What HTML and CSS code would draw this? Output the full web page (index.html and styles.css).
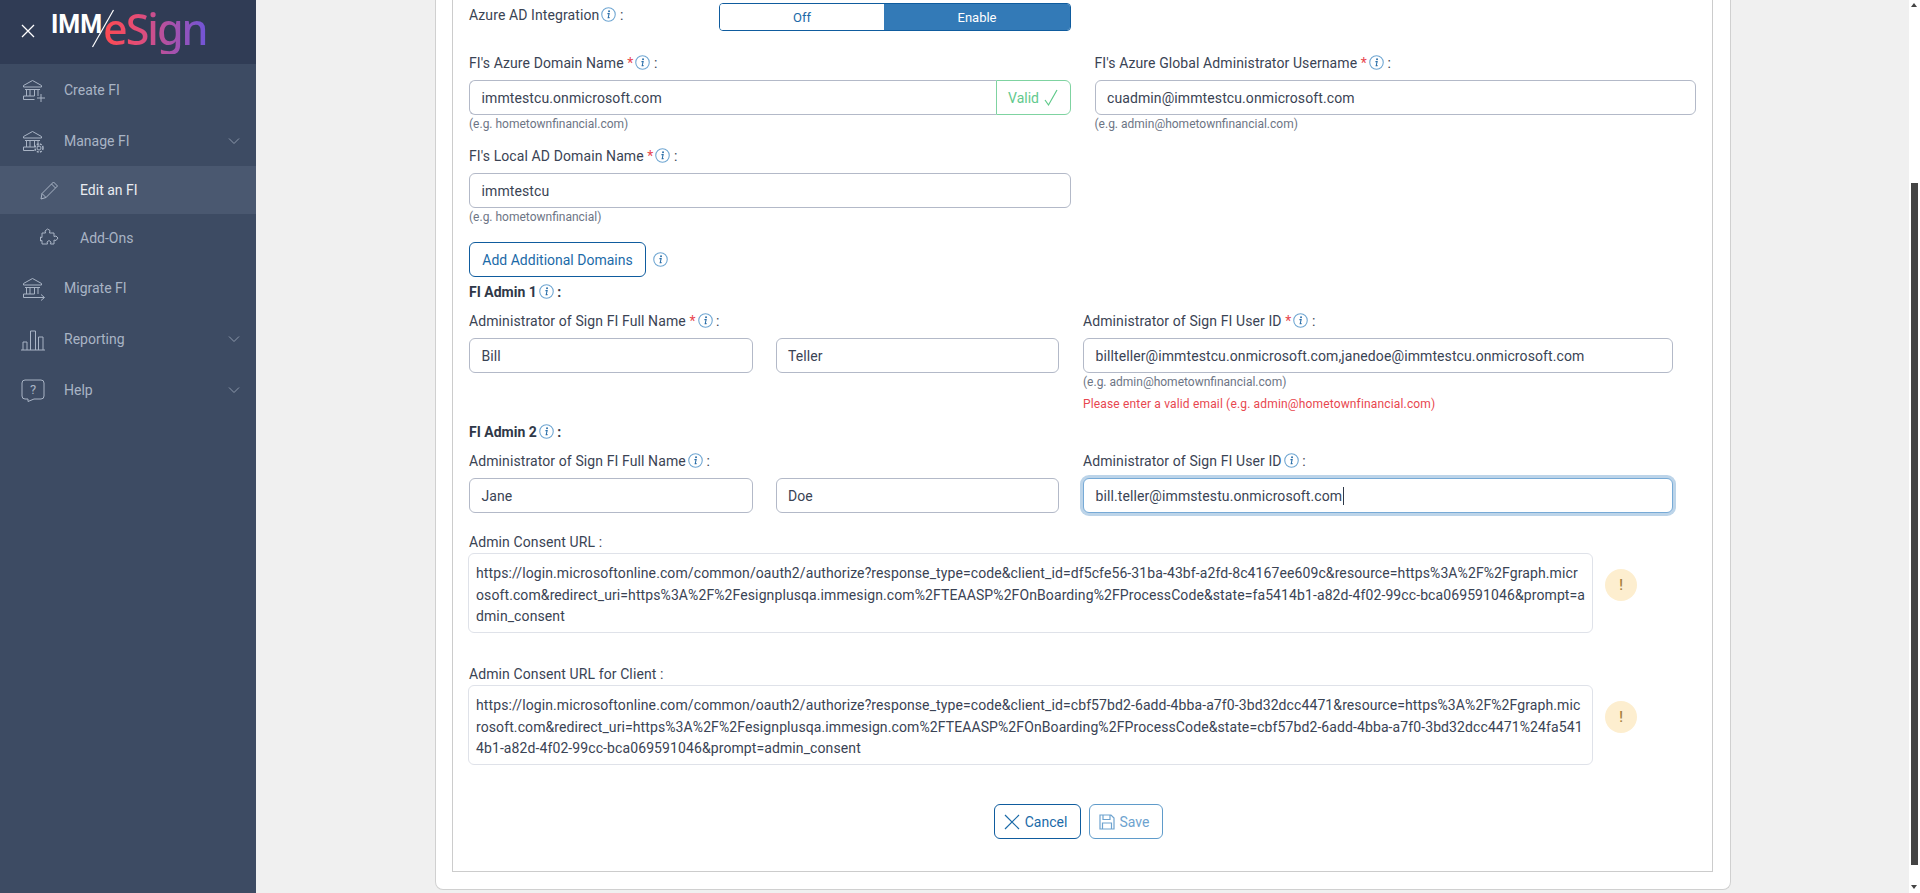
FILE: index.html
```html
<!DOCTYPE html>
<html lang="en">
<head>
<meta charset="utf-8">
<title>IMM eSign - Edit an FI</title>
<link rel="stylesheet" href="styles.css">
</head>
<body>
<svg class="defs" width="0" height="0" aria-hidden="true">
  <symbol id="info" viewBox="0 0 14 14">
    <circle cx="7" cy="7" r="6.300" fill="none" stroke="#6fa6d2" stroke-width="1"/>
    <circle cx="7.500" cy="4" r=".9" fill="#2a6ea8"/>
    <path d="M6 6.200h1.600l-.9 3.700h1.300" fill="none" stroke="#2a6ea8" stroke-width="1"/>
  </symbol>
  <symbol id="bank" viewBox="0 0 24 24">
    <path d="M2.500 7.500 11.500 2.500l9 5v1.500h-18zM4 11.500h15M5.500 11.500v6.500M9 11.500v6.500M13.500 11.500v6.500M17 11.500v6.500M2.500 18h11M2.500 18v3.500h11" fill="none" stroke="currentColor" stroke-width="1"/>
  </symbol>
  <symbol id="chev" viewBox="0 0 12 8">
    <path d="M1 1.500 6 6.500l5-5" fill="none" stroke="currentColor" stroke-width="1"/>
  </symbol>
</svg>

<div class="app">
  <aside class="sidebar">
    <header class="brand">
      <svg class="close" viewBox="0 0 14 14" width="14" height="14"><path d="M1 1l12 12M13 1 1 13" stroke="#fff" stroke-width="1.300"/></svg>
      <div class="logo">
        <span class="logo-imm">IMM</span>
        <svg class="logo-slash" viewBox="0 0 24 40" width="24" height="40"><path d="M1.500 38 22.500 1" stroke="#fff" stroke-width="1.200"/></svg>
        <span class="logo-sign">eSign</span>
      </div>
    </header>
    <nav class="menu">
      <a class="item">
        <span class="ico"><svg width="24" height="24"><use href="#bank"/><path d="M16 20h8M20 16v8" stroke="currentColor" fill="none"/></svg></span>
        <span class="item-text">Create FI</span>
      </a>
      <a class="item">
        <span class="ico"><svg width="24" height="24"><use href="#bank"/><circle cx="18" cy="19" r="2" fill="none" stroke="currentColor"/><circle cx="18" cy="19" r="4" fill="none" stroke="currentColor" stroke-width="1.500" stroke-dasharray="2 1.200"/></svg></span>
        <span class="item-text">Manage FI</span>
        <svg class="chev" width="12" height="8"><use href="#chev"/></svg>
      </a>
      <a class="item sub active">
        <span class="ico"><svg width="20" height="20" viewBox="0 0 20 20"><path d="M2 19l1-5.500L14.500 2l4 4L7 17.500zM12.500 4l4 4M3 13.500 7 17.500" fill="none" stroke="currentColor"/></svg></span>
        <span class="item-text">Edit an FI</span>
      </a>
      <a class="item sub">
        <span class="ico"><svg width="20" height="20" viewBox="0 0 20 20"><path d="M6.500 5 6 3l2.500-2 2.500 1.500-.5 2.500H15v3.500l2-.5 2 2-2 2.500-2-.5V16h-3.500l.5-2-2-1.500L8 14l.5 2H3v-3.500l-1.500.5V9l1.500.5V5z" fill="none" stroke="currentColor"/></svg></span>
        <span class="item-text">Add-Ons</span>
      </a>
      <a class="item">
        <span class="ico"><svg width="24" height="24"><use href="#bank"/><path d="M10 21.500h13M20 18.500l3.500 3-3.500 3" stroke="currentColor" fill="none"/></svg></span>
        <span class="item-text">Migrate FI</span>
      </a>
      <a class="item">
        <span class="ico"><svg width="24" height="24" viewBox="0 0 24 24"><path d="M0 23h24M2 23V15h4v8M9.500 23V4h5v19M17.500 23V10h4.500v13" fill="none" stroke="currentColor"/></svg></span>
        <span class="item-text">Reporting</span>
        <svg class="chev" width="12" height="8"><use href="#chev"/></svg>
      </a>
      <a class="item">
        <span class="ico"><svg width="24" height="24" viewBox="0 0 24 24"><path d="M4 2h16a3 3 0 0 1 3 3v13a3 3 0 0 1-3 3h-7l-6 2.500V21H4a3 3 0 0 1-3-3V5a3 3 0 0 1 3-3z" fill="none" stroke="currentColor"/><text x="12" y="16" class="q">?</text></svg></span>
        <span class="item-text">Help</span>
        <svg class="chev" width="12" height="8"><use href="#chev"/></svg>
      </a>
    </nav>
  </aside>

  <main class="main">
    <section class="card">
      <form class="panel">
        <div class="toggle-row">
          <div class="label toggle-label">Azure AD Integration<svg class="i"><use href="#info"/></svg> :</div>
          <div class="toggle">
            <span class="toggle-off">Off</span>
            <span class="toggle-on">Enable</span>
          </div>
        </div>

        <div class="cols">
          <div class="col">
            <div class="label">FI's Azure Domain Name <span class="req">*</span><svg class="i"><use href="#info"/></svg> :</div>
            <div class="group">
              <div class="input grow">immtestcu.onmicrosoft.com</div>
              <div class="valid">Valid
                <svg width="14" height="18" viewBox="0 0 14 18"><path d="M1 11l3.500 5L13 1" fill="none" stroke="#5fc98a" stroke-width="1.200"/></svg>
              </div>
            </div>
            <div class="hint">(e.g. hometownfinancial.com)</div>
          </div>
          <div class="col">
            <div class="label">FI's Azure Global Administrator Username <span class="req">*</span><svg class="i"><use href="#info"/></svg> :</div>
            <div class="input">cuadmin@immtestcu.onmicrosoft.com</div>
            <div class="hint">(e.g. admin@hometownfinancial.com)</div>
          </div>
        </div>

        <div class="cols next">
          <div class="col">
            <div class="label">FI's Local AD Domain Name <span class="req">*</span><svg class="i"><use href="#info"/></svg> :</div>
            <div class="input">immtestcu</div>
            <div class="hint">(e.g. hometownfinancial)</div>
          </div>
        </div>

        <div class="add-row">
          <button type="button" class="btn add">Add Additional Domains</button>
          <svg class="i"><use href="#info"/></svg>
        </div>

        <div class="section first">FI Admin 1<svg class="i"><use href="#info"/></svg> :</div>
        <div class="admin">
          <div class="names">
            <div class="label">Administrator of Sign FI Full Name <span class="req">*</span><svg class="i"><use href="#info"/></svg> :</div>
            <div class="pair">
              <div class="input">Bill</div>
              <div class="input">Teller</div>
            </div>
          </div>
          <div class="user">
            <div class="label">Administrator of Sign FI User ID <span class="req">*</span><svg class="i"><use href="#info"/></svg> :</div>
            <div class="input">billteller@immtestcu.onmicrosoft.com,janedoe@immtestcu.onmicrosoft.com</div>
            <div class="hint">(e.g. admin@hometownfinancial.com)</div>
            <div class="error">Please enter a valid email (e.g. admin@hometownfinancial.com)</div>
          </div>
        </div>

        <div class="section">FI Admin 2<svg class="i"><use href="#info"/></svg> :</div>
        <div class="admin">
          <div class="names">
            <div class="label">Administrator of Sign FI Full Name<svg class="i"><use href="#info"/></svg> :</div>
            <div class="pair">
              <div class="input">Jane</div>
              <div class="input">Doe</div>
            </div>
          </div>
          <div class="user">
            <div class="label">Administrator of Sign FI User ID<svg class="i"><use href="#info"/></svg> :</div>
            <div class="input focus"><span>bill.teller@immstestu.onmicrosoft.com</span><span class="caret"></span></div>
          </div>
        </div>

        <div class="label url-label">Admin Consent URL :</div>
        <div class="url-row">
          <div class="url">https://login.microsoftonline.com/common/oauth2/authorize?response_type=code&amp;client_id=df5cfe56-31ba-43bf-a2fd-8c4167ee609c&amp;resource=https%3A%2F%2Fgraph.micr<br>osoft.com&amp;redirect_uri=https%3A%2F%2Fesignplusqa.immesign.com%2FTEAASP%2FOnBoarding%2FProcessCode&amp;state=fa5414b1-a82d-4f02-99cc-bca069591046&amp;prompt=a<br>dmin_consent</div>
          <span class="warn">!</span>
        </div>

        <div class="label url-label second">Admin Consent URL for Client :</div>
        <div class="url-row">
          <div class="url">https://login.microsoftonline.com/common/oauth2/authorize?response_type=code&amp;client_id=cbf57bd2-6add-4bba-a7f0-3bd32dcc4471&amp;resource=https%3A%2F%2Fgraph.mic<br>rosoft.com&amp;redirect_uri=https%3A%2F%2Fesignplusqa.immesign.com%2FTEAASP%2FOnBoarding%2FProcessCode&amp;state=cbf57bd2-6add-4bba-a7f0-3bd32dcc4471%24fa541<br>4b1-a82d-4f02-99cc-bca069591046&amp;prompt=admin_consent</div>
          <span class="warn">!</span>
        </div>

        <div class="actions">
          <button type="button" class="btn cancel">
            <svg width="16" height="16" viewBox="0 0 16 16"><path d="M1 1l14 14M15 1 1 15" stroke="currentColor" stroke-width="1.200"/></svg>
            Cancel
          </button>
          <button type="button" class="btn save">
            <svg width="16" height="16" viewBox="0 0 16 16"><path d="M1 1h11l3 3v11H1zM4 1v4.500h7V1M3.500 15V9h9v6" fill="none" stroke="currentColor" stroke-width="1.200"/></svg>
            Save
          </button>
        </div>
      </form>
    </section>
  </main>

  <div class="scrollbar" aria-hidden="true">
    <span class="arrow up"></span>
    <span class="thumb"></span>
    <span class="arrow down"></span>
  </div>
</div>
</body>
</html>
```

FILE: styles.css
```css
* { box-sizing: border-box; }
html, body { margin: 0; height: 893px; overflow: hidden; }
body { font-family: Roboto, "Liberation Sans", sans-serif; font-size: 14px; color: #3a4354; background: #f0f0f0; }
.defs { display: block; height: 0; }
.app { display: flex; height: 893px; }

/* sidebar */
.sidebar { width: 256px; flex: none; background: #3d4b63; color: #a9b4c5; }
.brand { height: 64px; background: #303c55; display: flex; align-items: center; padding-left: 21px; gap: 16px; }
.close { flex: none; margin-top: -2px; }
.logo { position: relative; display: flex; align-items: flex-start; height: 64px; width: 160px; }
.logo-imm { position: absolute; left: 0; top: 10px; font-family: Roboto, sans-serif; font-weight: 700; font-size: 25px; line-height: 30px; color: #fff; }
.logo-slash { position: absolute; left: 40px; top: 9px; }
.logo-sign { position: absolute; left: 52px; top: 4px; font-family: "Noto Sans", sans-serif; font-weight: 500; font-size: 43px; line-height: 50px; letter-spacing: -2px; background: linear-gradient(90deg, #ff4a50 0%, #e24d78 35%, #a552ae 68%, #6f55d8 100%); -webkit-background-clip: text; background-clip: text; color: transparent; }
.menu { display: flex; flex-direction: column; }
.item { height: 51px; display: flex; align-items: center; padding-left: 21px; position: relative; }
.item.sub { height: 48px; padding-left: 39px; }
.item.active { background: #4a5870; color: #e9ecf1; }
.item.active .ico { color: #a9b4c5; }
.ico { width: 43px; flex: none; display: flex; align-items: center; }
.ico svg { overflow: visible; }
.sub .ico { width: 41px; }
.chev { position: absolute; right: 16px; top: 22px; color: #8d99ac; }
.q { font-family: Roboto, sans-serif; font-size: 13px; text-anchor: middle; fill: currentColor; stroke: none; }

/* main */
.main { flex: 1; min-width: 0; padding: 0 178px 0 179px; }
.card { height: 890px; background: #fff; border: 1px solid #d0d0d0; border-top: 0; border-radius: 0 0 8px 8px; padding: 0 17px 16px 16px; }
.panel { height: 872px; border: 1px solid #ccc; border-top: 0; padding: 3px 16px 0 16px; }

.label { height: 20px; line-height: 20px; white-space: nowrap; margin-bottom: 7px; color: #3a4354; letter-spacing: .1px; }
.req { color: #e8474f; }
.i { width: 15px; height: 15px; vertical-align: -2px; margin: 0 0 0 2px; }

.toggle-row { display: flex; }
.toggle-label { width: 250px; margin: 2px 0 0; }
.toggle { width: 352px; height: 28px; display: flex; border: 1px solid #0f5c9e; border-radius: 4px; overflow: hidden; font-size: 13px; }
.toggle-off { width: 164px; display: flex; align-items: center; justify-content: center; color: #1b6aa8; background: #fff; }
.toggle-on { flex: 1; display: flex; align-items: center; justify-content: center; color: #fff; background: #337ab7; }

.cols { display: flex; gap: 24px; margin-top: 22px; }
.cols.next { margin-top: 14px; }
.col { width: 602px; }
.input { height: 35px; border: 1px solid #b3b9c8; border-radius: 6px; padding: 0 11.500px; line-height: 34px; background: #fff; color: #3a4354; white-space: nowrap; letter-spacing: .1px; }
.group { display: flex; }
.input.grow { flex: 1; border-right: 0; border-radius: 6px 0 0 6px; }
.valid { width: 75px; height: 35px; border: 1px solid #7fd3a1; border-radius: 0 6px 6px 0; color: #62c98d; display: flex; align-items: center; justify-content: center; gap: 5px; }
.hint { font-size: 12px; line-height: 16px; margin-top: 1px; color: #6d7585; }
.error { font-size: 12px; line-height: 16px; margin-top: 6px; color: #e8474f; letter-spacing: .16px; }

.add-row { display: flex; align-items: center; margin-top: 17px; }
.add-row .i { margin-left: 7px; }
.btn { font-family: Roboto, sans-serif; font-size: 14px; height: 35px; border-radius: 6px; background: #fff; border: 1px solid #0f5c9e; color: #1b6aa8; display: flex; align-items: center; justify-content: center; gap: 5px; padding: 0; }
.add { width: 177px; }

.section { font-weight: 700; height: 20px; line-height: 20px; margin-top: 10px; color: #2f3848; }
.section.first { margin-top: 5px; }
.admin { display: flex; margin-top: 9px; }
.names { width: 614px; }
.pair { display: flex; gap: 23px; width: 590px; }
.pair .input { flex: 1; }
.user { width: 590px; }

.focus { border-color: #77aad6; box-shadow: 0 0 0 3px #bcd4e9; display: flex; align-items: center; }
.caret { width: 1px; height: 18px; background: #2f3848; margin-left: 1px; }

.url-label { margin: 19px 0 1px; }
.url-label.second { margin: 31px 0 1px; }
.url-row { display: flex; align-items: flex-start; margin-left: -1px; }
.url { width: 1125px; height: 80px; border: 1px solid #dfe2e9; border-radius: 6px; padding: 9px 7px; line-height: 21.500px; white-space: nowrap; color: #3a4354; letter-spacing: .1px; }
.warn { width: 32px; height: 32px; border-radius: 50%; margin: 16px 0 0 12px; background: #fdeecf; color: #a77f3c; display: flex; align-items: center; justify-content: center; font-size: 14px; font-weight: 500; }

.actions { display: flex; justify-content: center; gap: 8px; margin: 39px 8px 0 0; }
.cancel { width: 87px; padding-right: 4px; }
.save { width: 74px; padding-right: 4px; border-color: #5f9bca; color: #6ea3cf; }

/* page scrollbar */
.scrollbar { width: 11px; flex: none; background: #fff; position: relative; padding: 183px 2px 0 2px; }
.thumb { display: block; height: 682px; background: #444; }
.arrow { position: absolute; left: 2px; border: 3.500px solid transparent; }
.arrow.up { top: 3px; border-top: 0; border-bottom: 4px solid #444; }
.arrow.down { bottom: 4px; border-bottom: 0; border-top: 4px solid #444; }
```
